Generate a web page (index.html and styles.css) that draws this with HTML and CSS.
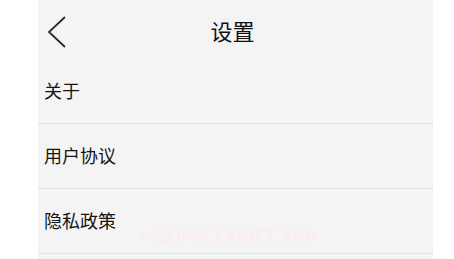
FILE: index.html
```html
<!DOCTYPE html>
<html lang="zh">
<head>
<meta charset="utf-8">
<link rel="stylesheet" href="styles.css">
</head>
<body>
<div class="panel">
  <header class="header">
    <div class="back">
      <svg width="20" height="34" viewBox="0 0 20 34"><path d="M18 2 L2 17 L18 32" fill="none" stroke="#2b2b2b" stroke-width="1.8"/></svg>
    </div>
    <h1 class="title">设置</h1>
    <div></div>
  </header>
  <ul class="list">
    <li class="row">关于</li>
    <li class="row">用户协议</li>
    <li class="row">隐私政策</li>
  </ul>
  <div class="watermark">• NOFKLXAWET.APP</div>
</div>
</body>
</html>
```
FILE: styles.css
```css
html, body {
  margin: 0;
  padding: 0;
  background: #ffffff;
}
body {
  font-family: "Noto Sans CJK SC", "Noto Sans", sans-serif;
  color: #1a1a1a;
}
.panel {
  position: relative;
  margin-left: 38px;
  width: 395px;
  height: 259px;
  background: #f4f4f4;
  overflow: hidden;
}
.header {
  height: 59px;
  display: grid;
  grid-template-columns: 1fr auto 1fr;
  align-items: center;
}
.back {
  padding-left: 9px;
  padding-top: 5px;
  display: flex;
  align-items: center;
}
.title {
  margin: 0;
  font-size: 22px;
  font-weight: 400;
  line-height: 1;
  color: #111;
  position: relative;
  left: -3px;
}
.list {
  list-style: none;
  margin: 0;
  padding: 0;
}
.row {
  height: 64px;
  border-bottom: 1px solid #e2e2e2;
  display: flex;
  align-items: center;
  padding-left: 6px;
  padding-bottom: 2px;
  box-sizing: border-box;
  height: 65px;
  font-size: 18px;
  color: #141414;
}
.watermark {
  position: absolute;
  left: 102px;
  top: 224px;
  font-family: "Open Sans", "Liberation Sans", sans-serif;
  font-weight: 600;
  font-size: 19px;
  color: #fcebf5;
  letter-spacing: -0.2px;
}
```
